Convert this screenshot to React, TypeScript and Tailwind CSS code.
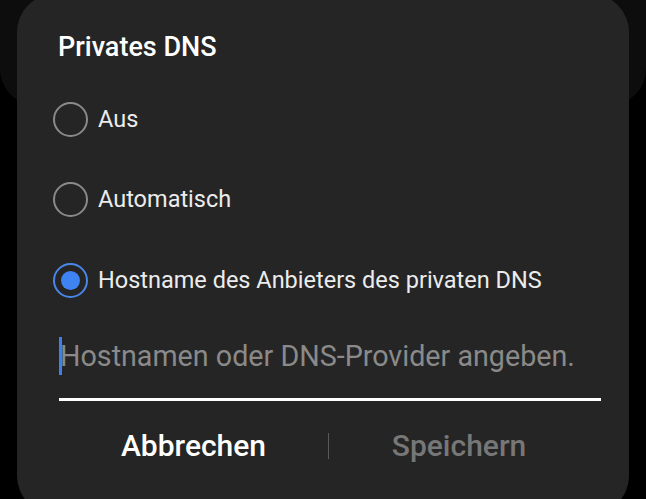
import { useState } from "react";

const options = ["Aus", "Automatisch", "Hostname des Anbieters des privaten DNS"];

const Radio = ({ checked }: { checked: boolean }) => (
    <div
        className={`w-[35px] h-[35px] rounded-full border-2 flex items-center justify-center shrink-0 ${
            checked ? "border-[#4a86e8]" : "border-[#8a8a8a]"
        }`}
    >
        {checked && <div className="w-[19px] h-[19px] rounded-full bg-[#3f82f2]"></div>}
    </div>
);

export default function App() {
    const [selected, setSelected] = useState(2);

    return (
        <div
            className="relative w-[646px] h-[499px] bg-black overflow-hidden"
            style={{ fontFamily: "Roboto, 'Noto Sans', sans-serif" }}
        >
            {/* panel behind the dialog */}
            <div className="absolute left-0 right-0 -top-[40px] h-[145px] rounded-[36px] bg-[#0d0d0d]"></div>

            <div className="relative mx-[17px] -mt-[6px] h-[520px] rounded-[38px] bg-[#252525] pl-[36px] pr-[28px] pt-[37px]">
                <h2 className="pl-[5px] text-[27px] leading-[32px] font-medium text-white">Privates DNS</h2>

                <div className="mt-[16px] flex flex-col">
                    {options.map((label, i) => (
                        <button
                            key={label}
                            onClick={() => setSelected(i)}
                            className="h-[80.5px] flex items-center gap-[10px] text-left"
                        >
                            <Radio checked={selected === i} />
                            <span className="text-[23.5px] text-[#ececec]">{label}</span>
                        </button>
                    ))}
                </div>

                <div className="mt-[15px] ml-[6px] flex items-center h-[40px]">
                    <div className="w-[3px] h-[38px] bg-[#3f7ff0]"></div>
                    <input
                        placeholder="Hostnamen oder DNS-Provider angeben."
                        className="flex-1 bg-transparent outline-none text-[28.7px] leading-[40px] text-white placeholder:text-[#8a8a8a] -ml-[2px]"
                    />
                </div>
                <div className="mt-[22px] ml-[6px] h-[3px] bg-white"></div>

                <div className="mt-[15px] ml-[6px] h-[60px] flex items-center">
                    <button className="w-[269px] text-[30px] font-medium text-white">Abbrechen</button>
                    <div className="w-px h-[26px] bg-[#5a5a5a]"></div>
                    <button className="flex-1 text-[30px] font-medium text-[#777] pr-[12px]">Speichern</button>
                </div>
            </div>
        </div>
    );
}
